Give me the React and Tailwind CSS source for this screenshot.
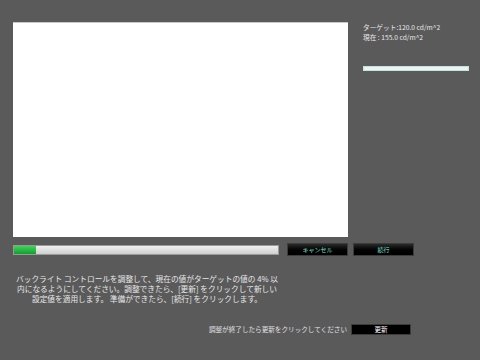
export default function App() {
  const jp = { fontFamily: '"Noto Sans CJK JP", "Noto Sans", sans-serif' };
  return (
    <div className="w-[480px] h-[360px] bg-[#5a5a5a] pt-[22px] pl-[13px] text-[#e8e8e8] overflow-hidden" style={jp}>
      <div className="flex">
        <div className="w-[335px] h-[215px] bg-white border-t border-[#c8c8c8]" />
        <div className="ml-[15px] w-[106px] pt-[0px]">
          <div className="text-[6.7px] leading-[10px] whitespace-nowrap">ターゲット:120.0 cd/m^2</div>
          <div className="text-[6.7px] leading-[10px] whitespace-nowrap">現在 : 155.0 cd/m^2</div>
          <div className="mt-[24px] h-[5px] w-[106px] bg-[#e6f6f4] border border-[#c9e2e0]" />
        </div>
      </div>
      <div className="flex items-center mt-[6px] h-[13px]">
        <div className="w-[266px] h-[10px] bg-gradient-to-b from-[#f0f0f0] to-[#cfcfcf] border border-[#9a9a9a] flex">
          <div className="w-[22px] h-full bg-gradient-to-b from-[#3fd35a] to-[#0fa02e]" />
        </div>
        <button className="ml-[8px] w-[61px] h-[13px] bg-gradient-to-b from-[#2a2a2a] via-[#050505] to-[#000] border border-[#3c3c3c] text-[6px] leading-none text-[#7fe0d8]">キャンセル</button>
        <button className="ml-[5px] w-[61px] h-[13px] bg-gradient-to-b from-[#2a2a2a] via-[#050505] to-[#000] border border-[#3c3c3c] text-[6px] leading-none text-[#7fe0d8]">続行</button>
      </div>
      <div className="mt-[18px] w-[268px] text-center text-[7.7px] leading-[10px] text-[#e8e8e8]">
        <div className="whitespace-nowrap">バックライト コントロールを調整して、現在の値がターゲットの値の 4% 以</div>
        <div className="whitespace-nowrap">内になるようにしてください。調整できたら、[更新] をクリックして新しい</div>
        <div className="whitespace-nowrap">設定値を適用します。 準備ができたら、[続行] をクリックします。</div>
      </div>
      <div className="mt-[20px] flex items-center justify-end w-[398px]">
        <div className="text-[6.6px] leading-none whitespace-nowrap text-[#e0e0e0]">調整が終了したら更新をクリックしてください</div>
        <button className="ml-[4px] w-[60px] h-[11px] bg-black border border-[#3c3c3c] text-[6.5px] leading-none text-white">更新</button>
      </div>
    </div>
  );
}
